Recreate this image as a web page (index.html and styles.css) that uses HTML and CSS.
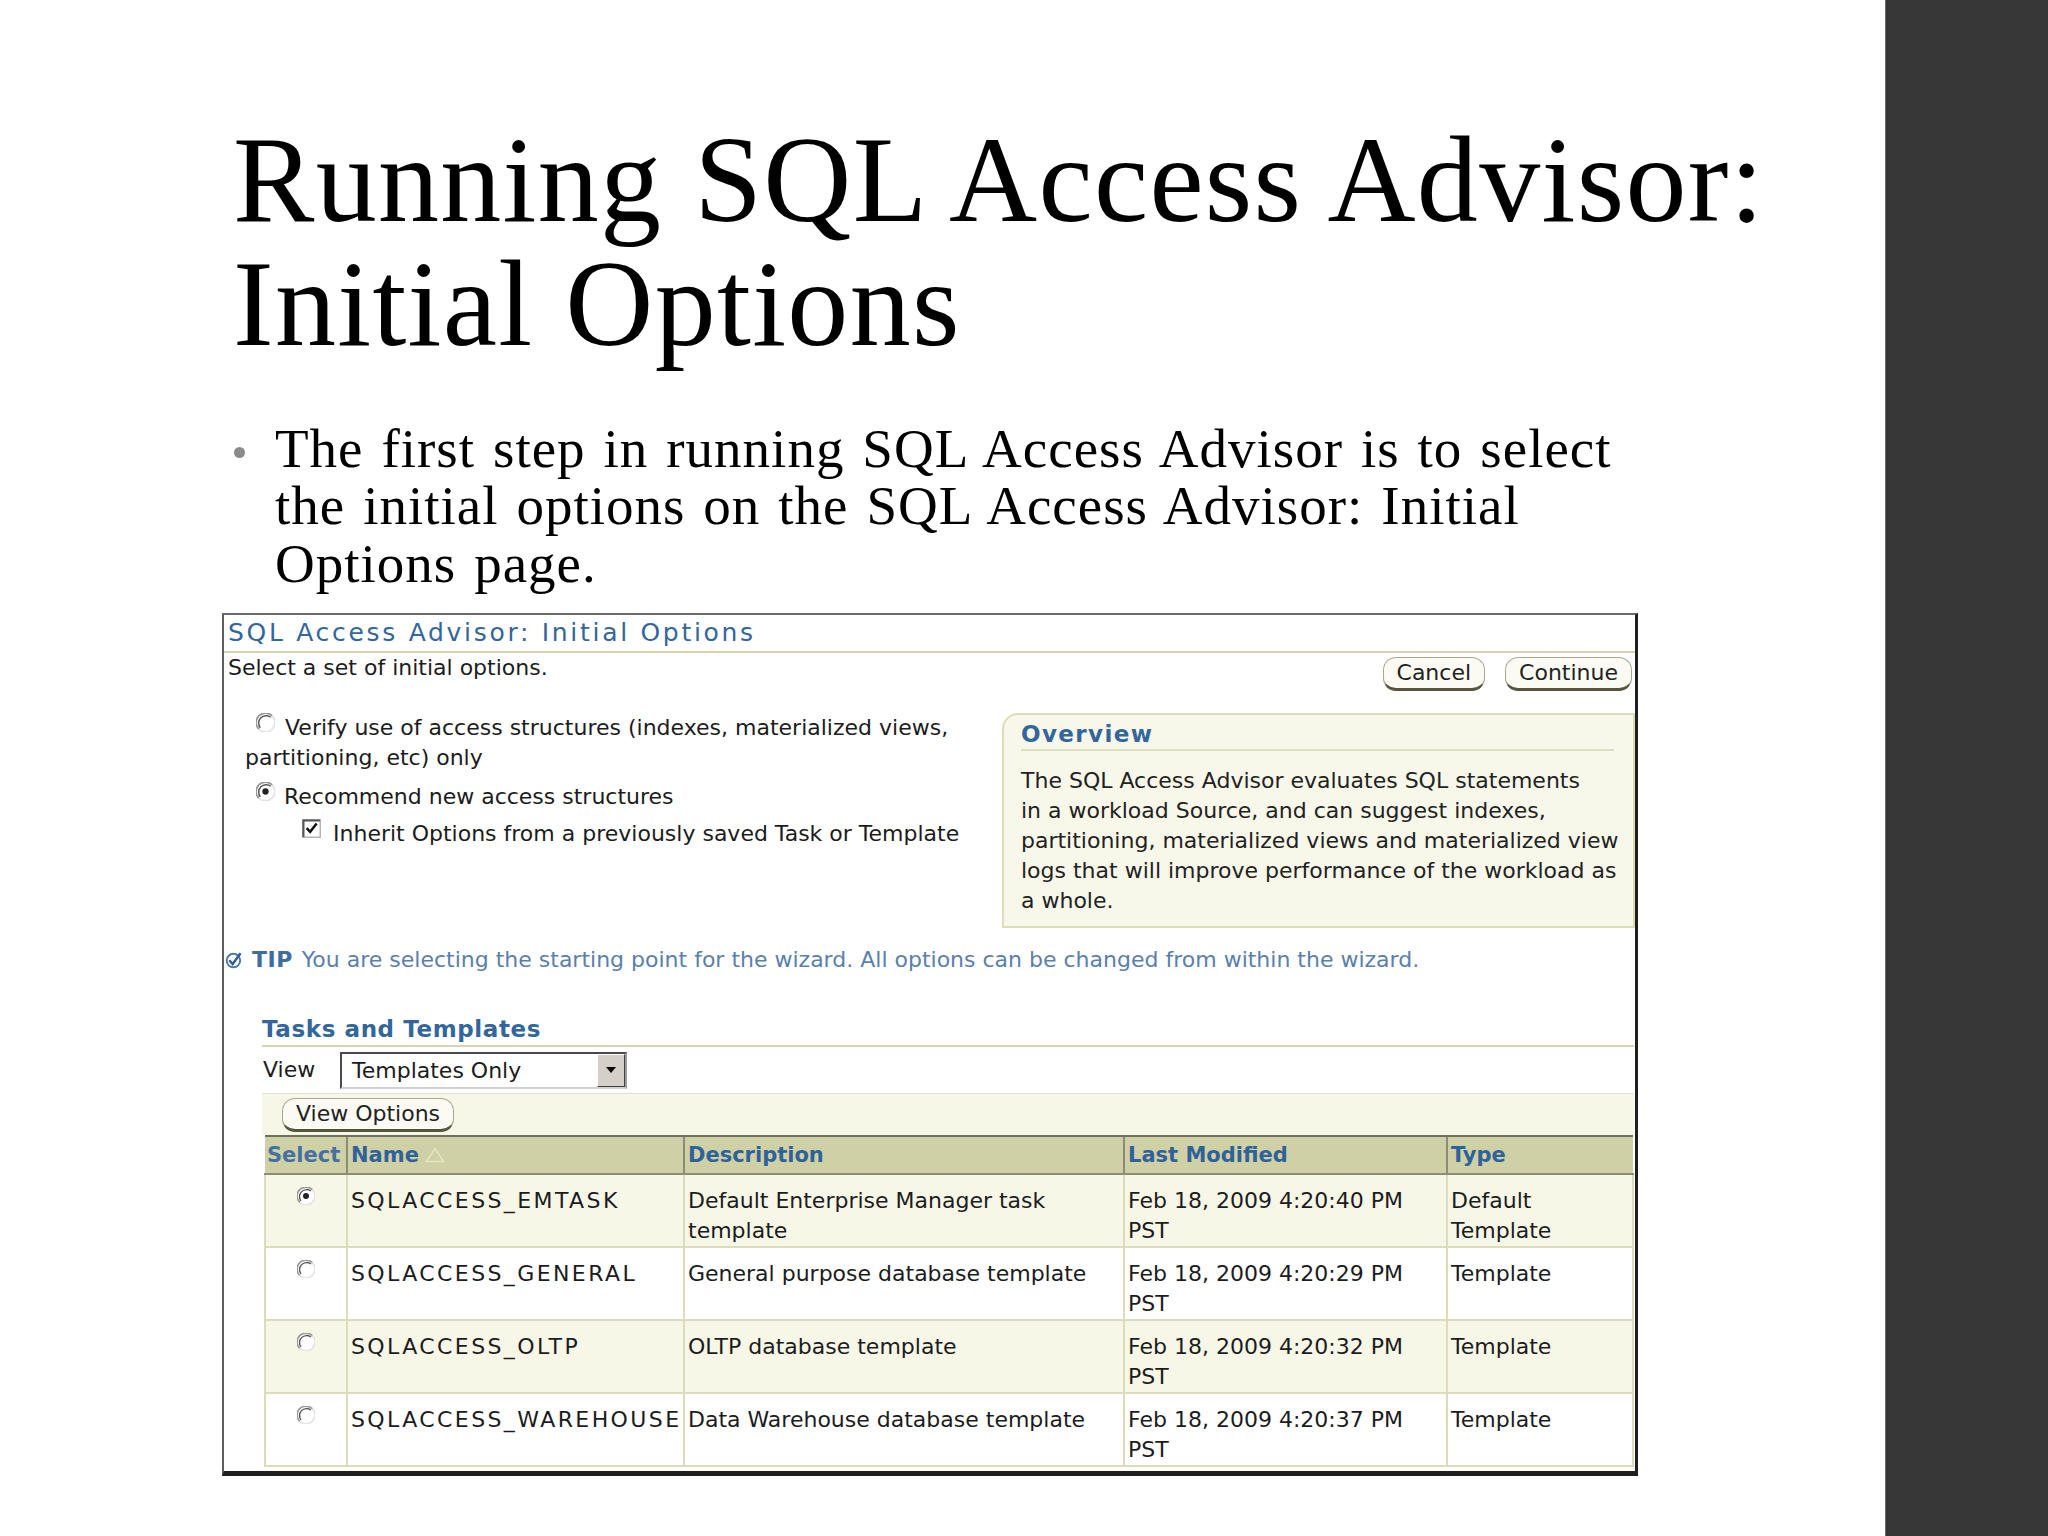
FILE: index.html
```html
<!DOCTYPE html>
<html lang="en">
<head>
<meta charset="utf-8">
<title>Running SQL Access Advisor: Initial Options</title>
<link rel="stylesheet" href="styles.css">
</head>
<body>
<div class="slide">
  <main class="content">
    <h1 class="title">Running SQL Access Advisor:<br>Initial Options</h1>
    <ul class="bullets">
      <li><span class="dot"></span><span class="btext">The first step in running SQL Access Advisor is to select<br>the initial options on the SQL Access Advisor: Initial<br>Options page.</span></li>
    </ul>

    <section class="panel">
      <div class="p-head">SQL Access Advisor: Initial Options</div>
      <div class="p-intro">
        <span>Select a set of initial options.</span>
        <div class="btns"><span class="btn">Cancel</span><span class="btn">Continue</span></div>
      </div>

      <div class="p-mid">
        <div class="opts">
          <p class="opt opt1"><svg class="radio" viewBox="0 0 12 12"><circle cx="6" cy="6" r="5.4" fill="#fff"/><path d="M10.2 1.8A5.9 5.9 0 0 1 1.8 10.2" stroke="#e4e4e4" stroke-width="1.1" fill="none"/><path d="M1.8 10.2A5.9 5.9 0 0 1 10.2 1.8" stroke="#9a9a9a" stroke-width="1.1" fill="none"/><path d="M2.7 9.3A4.7 4.7 0 0 1 9.3 2.7" stroke="#555" stroke-width=".9" fill="none"/></svg>Verify use of access structures (indexes, materialized views,<br>partitioning, etc) only</p>
          <p class="opt opt2"><svg class="radio" viewBox="0 0 12 12"><circle cx="6" cy="6" r="5.4" fill="#fff"/><path d="M10.2 1.8A5.9 5.9 0 0 1 1.8 10.2" stroke="#e4e4e4" stroke-width="1.1" fill="none"/><path d="M1.8 10.2A5.9 5.9 0 0 1 10.2 1.8" stroke="#9a9a9a" stroke-width="1.1" fill="none"/><path d="M2.7 9.3A4.7 4.7 0 0 1 9.3 2.7" stroke="#555" stroke-width=".9" fill="none"/><circle cx="6" cy="6" r="2" fill="#222"/></svg>Recommend new access structures</p>
          <p class="opt opt3"><svg class="check" viewBox="0 0 13 13"><rect x=".5" y=".5" width="12" height="12" fill="#fff" stroke="#b4b4b4"/><path d="M1 12.3V1h11.3" stroke="#555" stroke-width="1.4" fill="none"/><path d="M3.2 6.2l2.4 2.6 4.4-5.8" stroke="#111" stroke-width="1.7" fill="none"/></svg>Inherit Options from a previously saved Task or Template</p>
        </div>
        <aside class="overview">
          <h3>Overview</h3>
          <p>The SQL Access Advisor evaluates SQL statements<br>in a workload Source, and can suggest indexes,<br>partitioning, materialized views and materialized view<br>logs that will improve performance of the workload as<br>a whole.</p>
        </aside>
      </div>

      <div class="tip"><svg class="tip-icon" viewBox="0 0 16 16"><circle cx="7.5" cy="8.5" r="6" fill="none" stroke="#4d77a6" stroke-width="1.7"/><path d="M3.8 8.2l3 3.4 7-9.6" stroke="#2e5f95" stroke-width="2.2" fill="none"/></svg><b>TIP</b><span>You are selecting the starting point for the wizard. All options can be changed from within the wizard.</span></div>

      <div class="tasks">
        <h2>Tasks and Templates</h2>
        <div class="viewrow">
          <span class="lbl">View</span>
          <div class="select"><span class="val">Templates Only</span><span class="arrow"><svg width="10" height="6" viewBox="0 0 10 6"><path d="M0 0h10L5 6z" fill="#000"/></svg></span></div>
        </div>
        <div class="toolbar"><span class="btn">View Options</span></div>
        <table class="grid">
          <colgroup><col class="c1"><col class="c2"><col class="c3"><col class="c4"><col class="c5"></colgroup>
          <thead>
            <tr><th>Select</th><th>Name<svg class="sort" viewBox="0 0 20 16"><path d="M10 1.5L18.5 14.5H1.5z" fill="none" stroke="#e2e4c4" stroke-width="1.6"/></svg></th><th>Description</th><th>Last Modified</th><th>Type</th></tr>
          </thead>
          <tbody>
            <tr class="alt">
              <td class="sel"><svg class="radio small" viewBox="0 0 12 12"><circle cx="6" cy="6" r="5.4" fill="#fff"/><path d="M10.2 1.8A5.9 5.9 0 0 1 1.8 10.2" stroke="#e4e4e4" stroke-width="1.1" fill="none"/><path d="M1.8 10.2A5.9 5.9 0 0 1 10.2 1.8" stroke="#9a9a9a" stroke-width="1.1" fill="none"/><path d="M2.7 9.3A4.7 4.7 0 0 1 9.3 2.7" stroke="#555" stroke-width=".9" fill="none"/><circle cx="6" cy="6" r="2" fill="#222"/></svg></td>
              <td class="name">SQLACCESS_EMTASK</td><td>Default Enterprise Manager task template</td><td>Feb 18, 2009 4:20:40 PM PST</td><td>Default Template</td>
            </tr>
            <tr>
              <td class="sel"><svg class="radio small" viewBox="0 0 12 12"><circle cx="6" cy="6" r="5.4" fill="#fff"/><path d="M10.2 1.8A5.9 5.9 0 0 1 1.8 10.2" stroke="#e4e4e4" stroke-width="1.1" fill="none"/><path d="M1.8 10.2A5.9 5.9 0 0 1 10.2 1.8" stroke="#9a9a9a" stroke-width="1.1" fill="none"/><path d="M2.7 9.3A4.7 4.7 0 0 1 9.3 2.7" stroke="#555" stroke-width=".9" fill="none"/></svg></td>
              <td class="name">SQLACCESS_GENERAL</td><td>General purpose database template</td><td>Feb 18, 2009 4:20:29 PM PST</td><td>Template</td>
            </tr>
            <tr class="alt">
              <td class="sel"><svg class="radio small" viewBox="0 0 12 12"><circle cx="6" cy="6" r="5.4" fill="#fff"/><path d="M10.2 1.8A5.9 5.9 0 0 1 1.8 10.2" stroke="#e4e4e4" stroke-width="1.1" fill="none"/><path d="M1.8 10.2A5.9 5.9 0 0 1 10.2 1.8" stroke="#9a9a9a" stroke-width="1.1" fill="none"/><path d="M2.7 9.3A4.7 4.7 0 0 1 9.3 2.7" stroke="#555" stroke-width=".9" fill="none"/></svg></td>
              <td class="name">SQLACCESS_OLTP</td><td>OLTP database template</td><td>Feb 18, 2009 4:20:32 PM PST</td><td>Template</td>
            </tr>
            <tr>
              <td class="sel"><svg class="radio small" viewBox="0 0 12 12"><circle cx="6" cy="6" r="5.4" fill="#fff"/><path d="M10.2 1.8A5.9 5.9 0 0 1 1.8 10.2" stroke="#e4e4e4" stroke-width="1.1" fill="none"/><path d="M1.8 10.2A5.9 5.9 0 0 1 10.2 1.8" stroke="#9a9a9a" stroke-width="1.1" fill="none"/><path d="M2.7 9.3A4.7 4.7 0 0 1 9.3 2.7" stroke="#555" stroke-width=".9" fill="none"/></svg></td>
              <td class="name">SQLACCESS_WAREHOUSE</td><td>Data Warehouse database template</td><td>Feb 18, 2009 4:20:37 PM PST</td><td>Template</td>
            </tr>
          </tbody>
        </table>
      </div>
    </section>
  </main>
  <div class="bar"></div>
</div>
</body>
</html>
```

FILE: styles.css
```css
* { box-sizing: border-box; }

html, body {
  margin: 0;
  padding: 0;
  background: #ffffff;
}

.slide {
  width: 2048px;
  height: 1536px;
  display: grid;
  grid-template-columns: 1885px 163px;
  overflow: hidden;
  background: #ffffff;
}

.content {
  padding: 118px 0 0 222px;
}

.bar {
  background: #373737;
  border-left: 1px solid #6a6a6a;
}

/* ---------- slide text ---------- */
.title {
  margin: 0 0 0 11px;
  font-family: "Liberation Serif", "Times New Roman", serif;
  font-weight: normal;
  font-size: 122px;
  line-height: 124px;
  letter-spacing: 1.3px;
  color: #000;
  white-space: nowrap;
}

.bullets {
  list-style: none;
  margin: 53.7px 0 0;
  padding: 0;
  font-family: "Liberation Serif", "Times New Roman", serif;
  font-size: 55px;
  line-height: 57.5px;
  letter-spacing: 1px;
  word-spacing: 3.2px;
  color: #000;
}

.bullets li {
  display: flex;
  align-items: flex-start;
}

.dot {
  flex: none;
  width: 11px;
  height: 11px;
  border-radius: 50%;
  background: #8a8a8a;
  margin: 27.3px 30.5px 0 11.5px;
}

.btext { white-space: nowrap; }

/* ---------- embedded EM screen ---------- */
.panel {
  margin-top: 20.8px;
  width: 1416px;
  border-style: solid;
  border-width: 2px 3px 5px 2px;
  border-color: #6b6b6b #1f1f1f #1f1f1f #5e5e5e;
  padding-bottom: 4px;
  font-family: "DejaVu Sans", "Liberation Sans", sans-serif;
  font-size: 22px;
  line-height: 30px;
  color: #1c1c1c;
  background: #fff;
}

.p-head {
  padding-left: 4px;
  font-size: 25px;
  line-height: 36px;
  letter-spacing: 2.7px;
  color: #33669a;
  border-bottom: 2px solid #d5d5ad;
  white-space: nowrap;
}

.p-intro {
  display: flex;
  justify-content: space-between;
  align-items: flex-start;
  padding-left: 4px;
  height: 38px;
  white-space: nowrap;
}

.btns {
  display: flex;
  gap: 20px;
  margin: 4px 3px 0 0;
}

.btn {
  display: inline-block;
  height: 34px;
  padding: 0 13px;
  border: 1.5px solid #a8a88e;
  border-bottom: 3px solid #56563e;
  border-radius: 13px;
  background: #fbfbf4;
  line-height: 29px;
  color: #222;
  white-space: nowrap;
}

.p-mid {
  display: grid;
  grid-template-columns: 778px 633px;
  margin-top: 22px;
}

.opt {
  margin: 0;
  white-space: nowrap;
}

.radio {
  display: inline-block;
  width: 19px;
  height: 19px;
  vertical-align: top;
}

.check {
  display: inline-block;
  width: 19px;
  height: 19px;
  vertical-align: top;
  margin-right: 12px;
}

.opt1 { padding-left: 21px; }
.opt1 .radio { margin: 0 10px 0 11px; }
.opt2 { margin-top: 9px; padding-left: 32px; }
.opt2 .radio { margin-right: 9px; }
.opt3 { margin-top: 7px; padding-left: 78px; }

.overview {
  height: 215px;
  border: 2px solid #dcdcb9;
  border-top-left-radius: 16px;
  background: #f8f8ea;
  padding: 4px 19px 10px 17px;
}

.overview h3 {
  margin: 0;
  font-size: 23px;
  line-height: 30px;
  font-weight: bold;
  letter-spacing: 1.4px;
  color: #33669a;
  border-bottom: 2px solid #dedec2;
}

.overview p {
  margin: 15px 0 0;
  white-space: nowrap;
  color: #222;
}

.tip {
  margin-top: 17px;
  display: flex;
  align-items: flex-start;
  color: #5a80ad;
  white-space: nowrap;
}

.tip-icon {
  flex: none;
  width: 18px;
  height: 18px;
  margin: 6px 9px 0 1px;
}

.tip b {
  letter-spacing: 0.5px;
  margin-right: 9px;
  color: #3f6c9e;
}

.tasks {
  margin-top: 38px;
  padding: 0 1px 0 38px;
}

.tasks h2 {
  margin: 0;
  font-size: 23px;
  line-height: 32px;
  font-weight: bold;
  letter-spacing: 0.6px;
  color: #33669a;
  border-bottom: 2px solid #d5d5ad;
  white-space: nowrap;
}

.viewrow {
  display: flex;
  align-items: center;
  padding-top: 5px;
  height: 42px;
}

.viewrow .lbl {
  width: 78px;
  padding-left: 1px;
}

.select {
  display: flex;
  width: 287px;
  height: 37px;
  border: 2px solid;
  border-color: #4a4a4a #9a9a9a #d0d0d0 #4a4a4a;
  background: #fff;
}

.select .val {
  flex: 1;
  padding-left: 10px;
  line-height: 33px;
  white-space: nowrap;
}

.select .arrow {
  width: 28px;
  background: #d4d0c8;
  border: 1px solid;
  border-color: #ffffff #404040 #404040 #ffffff;
  display: flex;
  align-items: center;
  justify-content: center;
}

.toolbar {
  margin-top: 4px;
  height: 42px;
  background: #f7f7e8;
  border-top: 1px solid #e2e2c8;
  padding: 4px 0 0 20px;
}

/* ---------- results table ---------- */
.grid {
  margin-left: 2px;
  width: 1368px;
  border-collapse: collapse;
  table-layout: fixed;
}

.c1 { width: 82px; }
.c2 { width: 337px; }
.c3 { width: 440px; }
.c4 { width: 323px; }
.c5 { width: 186px; }

.grid th {
  height: 38px;
  padding: 0 0 0 3px;
  background: #cfd0a6;
  color: #2f6299;
  font-weight: bold;
  font-size: 21px;
  text-align: left;
  vertical-align: middle;
  border-top: 2px solid #6f6f62;
  border-bottom: 2px solid #8d8d75;
  border-left: 2px solid #8d8d75;
  white-space: nowrap;
}

.grid th:first-child {
  border-left: none;
  padding-left: 2px;
  color: #4670a0;
}

.sort {
  width: 20px;
  height: 16px;
  margin-left: 6px;
  vertical-align: -1px;
}

.grid td {
  height: 72.5px;
  padding: 11px 4px 0 3px;
  vertical-align: top;
  border: 2px solid #dcdcbc;
  background: #ffffff;
  color: #1c1c1c;
}

.grid tr.alt td { background: #f7f7e8; }

.grid td.sel {
  text-align: center;
  padding: 12px 0 0;
}

.grid td.name {
  padding-right: 0;
  white-space: nowrap;
  letter-spacing: 2.4px;
}

.radio.small {
  width: 18px;
  height: 18px;
}
```
